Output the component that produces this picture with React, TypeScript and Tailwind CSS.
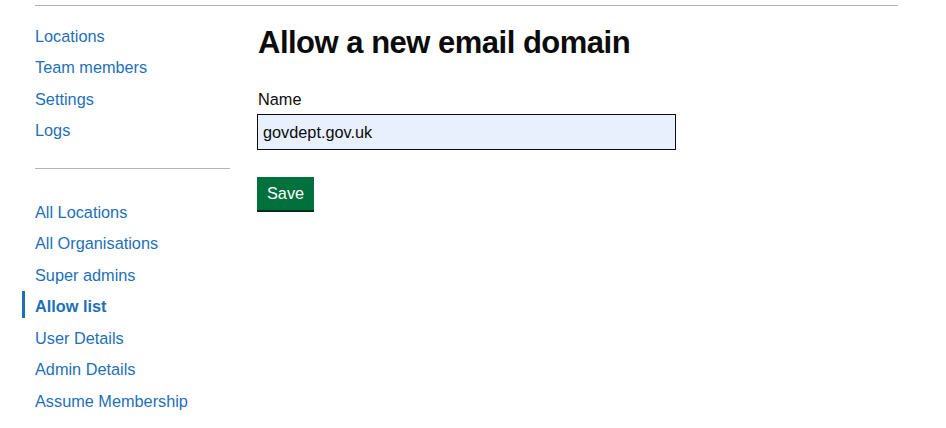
import React from "react";

const group1 = ["Locations", "Team members", "Settings", "Logs"];
const group2 = [
  "All Locations",
  "All Organisations",
  "Super admins",
  "Allow list",
  "User Details",
  "Admin Details",
  "Assume Membership",
];

function NavItem({ label, active }: { label: string; active?: boolean }) {
  return (
    <li className="relative h-[31.5px] flex items-center">
      {active && (
        <span className="absolute left-[-13px] top-[0px] w-[3px] h-[27px] bg-[#1d70b8]" />
      )}
      <a
        href="#"
        className={
          "text-[16.3px] leading-[20px] text-[#1d70b8] no-underline " +
          (active ? "font-bold" : "")
        }
      >
        {label}
      </a>
    </li>
  );
}

export default function App() {
  return (
    <div
      className="w-[946px] h-[428px] bg-white text-[#0b0c0c]"
      style={{ fontFamily: '"Liberation Sans", Arial, sans-serif' }}
    >
      <div className="pt-[5px] pl-[35px]">
        <div className="w-[863px] border-t border-[#b1b4b6] flex gap-[27px]">
          <nav className="w-[195px] pt-[14px]">
            <ul>
              {group1.map((l) => (
                <NavItem key={l} label={l} />
              ))}
            </ul>
            <div className="mt-[22px] border-t border-[#b1b4b6]" />
            <ul className="mt-[27px]">
              {group2.map((l) => (
                <NavItem key={l} label={l} active={l === "Allow list"} />
              ))}
            </ul>
          </nav>
          <main className="flex-1 pt-[19px]">
            <h1 className="text-[31px] tracking-[-0.5px] leading-[36px] font-bold pl-[1px]">
              Allow a new email domain
            </h1>
            <label className="block mt-[28px] text-[16.3px] leading-[20px] pl-[1px]">
              Name
            </label>
            <div className="mt-[5px] w-[419px] h-[36px] border border-[#0b0c0c] bg-[#e8f0fe] flex items-center px-[5px] text-[16.3px]">
              govdept.gov.uk
            </div>
            <button className="mt-[27px] h-[33px] px-[10px] bg-[#00703c] text-white text-[16.3px] shadow-[0_2px_0_#002d18] flex items-center">
              Save
            </button>
          </main>
        </div>
      </div>
    </div>
  );
}
